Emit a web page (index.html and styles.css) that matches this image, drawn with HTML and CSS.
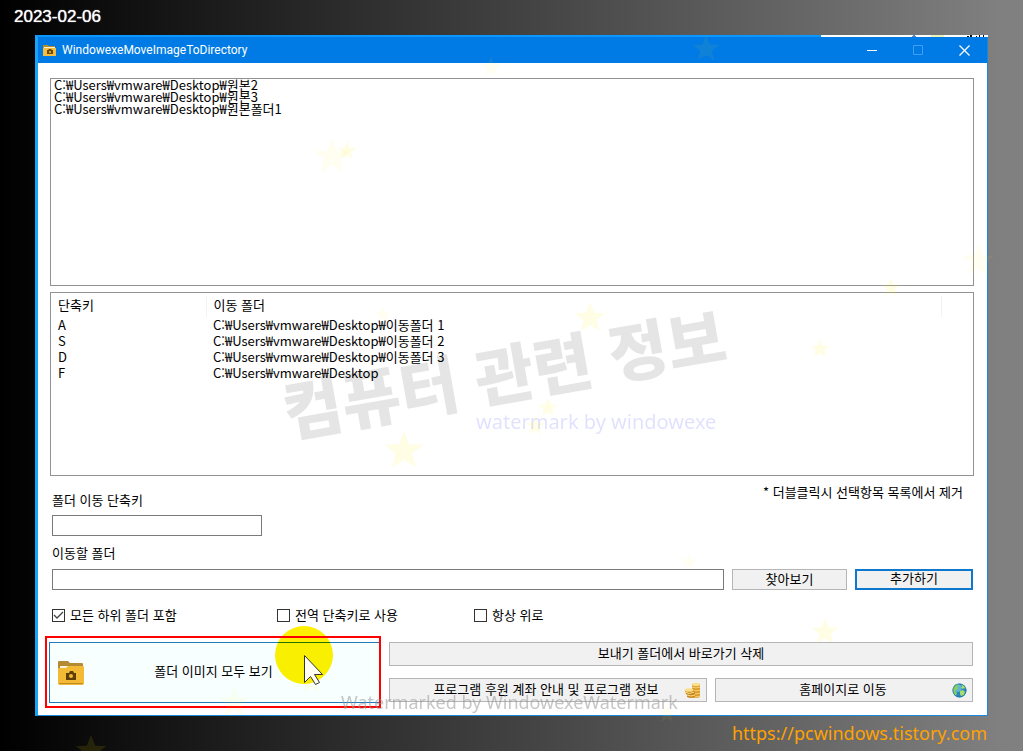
FILE: index.html
```html
<!DOCTYPE html>
<html lang="ko">
<head>
    <meta charset="UTF-8">
    <meta name="viewport" content="width=device-width, initial-scale=1.0">
    <title>WindowexeMoveImageToDirectory</title>
    <link rel="stylesheet" href="styles.css">
</head>
<body>
    <header class="date">2023-02-06</header>

    <main class="window">
        <div class="behind">
            <svg width="167" height="2">
                <path d="M92 0h2v1h1v1h-4v-1h1z" fill="#5b87b8"/>
                <path d="M110 0h13v2h-13z" fill="#eef3b8"/>
                <path d="M149 0h2v2h-2zM155 1h1v1h-1zM158 0h1v2h-1zM162 0h1v2h-1zM146 1h2v1h-2z" fill="#111"/>
            </svg>
        </div>
        <div class="titlebar">
            <svg class="title-icon" width="13" height="12" viewBox="0 0 13 12">
                <path d="M0 1h5l1 1h6v3H0z" fill="#b98a2a"/>
                <path d="M1 3h11v2H1z" fill="#fff3cf"/>
                <path d="M0 4h13v8H0z" fill="#f5bd3b"/>
                <path d="M4 6h1l1-1h2l1 1h1v4H4z" fill="#6b4a08"/>
                <circle cx="7" cy="8" r="1" fill="#f5bd3b"/>
            </svg>
            <h1>WindowexeMoveImageToDirectory</h1>
            <button class="win-btn" aria-label="최소화">
                <svg width="10" height="11"><path d="M0 5.500h10" stroke="#fff"/></svg>
            </button>
            <button class="win-btn" aria-label="최대화" disabled>
                <svg width="10" height="11"><path d="M.5 .5h9v9h-9z" fill="none" stroke="#3fa0f2"/></svg>
            </button>
            <button class="win-btn" aria-label="닫기">
                <svg width="11" height="11"><path d="M.5 .5l10 10M10.500 .5l-10 10" stroke="#fff" stroke-width="1.300"/></svg>
            </button>
        </div>

        <div class="content">
            <ul class="source-list">
                <li>C:₩Users₩vmware₩Desktop₩원본2</li>
                <li>C:₩Users₩vmware₩Desktop₩원본3</li>
                <li>C:₩Users₩vmware₩Desktop₩원본폴더1</li>
            </ul>

            <div class="target-list">
                <table>
                    <thead>
                        <tr><th class="key">단축키</th><th class="folder">이동 폴더</th><th></th></tr>
                    </thead>
                    <tbody>
                        <tr><td>A</td><td>C:₩Users₩vmware₩Desktop₩이동폴더 1</td><td></td></tr>
                        <tr><td>S</td><td>C:₩Users₩vmware₩Desktop₩이동폴더 2</td><td></td></tr>
                        <tr><td>D</td><td>C:₩Users₩vmware₩Desktop₩이동폴더 3</td><td></td></tr>
                        <tr><td>F</td><td>C:₩Users₩vmware₩Desktop</td><td></td></tr>
                    </tbody>
                </table>
            </div>

            <form class="form" onsubmit="return false">
                <div class="key-row">
                    <div class="field">
                        <label for="shortcut">폴더 이동 단축키</label>
                        <input type="text" id="shortcut">
                    </div>
                    <p class="hint">* 더블클릭시 선택항목 목록에서 제거</p>
                </div>

                <label class="folder-label" for="folder">이동할 폴더</label>
                <div class="folder-row">
                    <input type="text" id="folder">
                    <button type="button" class="btn browse">찾아보기</button>
                    <button type="submit" class="btn add">추가하기</button>
                </div>

                <div class="checks">
                    <label><input type="checkbox" checked>모든 하위 폴더 포함</label>
                    <label><input type="checkbox">전역 단축키로 사용</label>
                    <label><input type="checkbox">항상 위로</label>
                </div>

                <div class="actions">
                    <div class="highlight">
                        <button type="button" class="view-all">
                            <svg width="26" height="24" viewBox="0 0 26 24">
                                <path d="M1 0h9l2 2h12q1 0 1 1v6H0V1q0-1 1-1z" fill="#b58a34"/>
                                <path d="M2 5h22v3H2z" fill="#fff5d8"/>
                                <path d="M0 8q0-1 1-1h7l2-2h15q1 0 1 1v16q0 2-2 2H2q-2 0-2-2z" fill="#f3ba36"/>
                                <path d="M1 22.500h24" stroke="#c08b22"/>
                                <path d="M8 12h3l1-2h3l1 2h2v7H8z" fill="#5e3e05"/>
                                <circle cx="13" cy="15" r="2" fill="#f3ba36"/>
                            </svg>
                            <span>폴더 이미지 모두 보기</span>
                        </button>
                    </div>
                    <div class="links">
                        <button type="button" class="btn wide">보내기 폴더에서 바로가기 삭제</button>
                        <button type="button" class="btn with-icon">
                            <span>프로그램 후원 계좌 안내 및 프로그램 정보</span>
                            <svg width="17" height="17" viewBox="0 0 17 17">
                                <path d="M8 2v13q4 2 8 0V2z" fill="#d99a2b"/>
                                <ellipse cx="12" cy="2.500" rx="4" ry="1.700" fill="#fbe08a"/>
                                <path d="M8 5q4 2 8 0M8 8q4 2 8 0M8 11q4 2 8 0M8 14q4 2 8 0" fill="none" stroke="#fbd978"/>
                                <path d="M1 8v2q1 2 2 3v2q4 2 8 0v-3l-1-4z" fill="#c98720"/>
                                <ellipse cx="5" cy="8" rx="4.500" ry="1.800" fill="#fbe08a"/>
                                <path d="M1 10q4 3 9 0M3 13q4 2 8 0" fill="none" stroke="#fbe08a"/>
                            </svg>
                        </button>
                        <button type="button" class="btn with-icon">
                            <span>홈페이지로 이동</span>
                            <svg width="15" height="15" viewBox="0 0 15 15">
                                <circle cx="7.500" cy="7.500" r="7" fill="#2a86bd"/>
                                <circle cx="5.500" cy="5" r="4" fill="#5fb5dc"/>
                                <path d="M1 5q2-4 5-4l1 2-2 1 1 2-3 2 2 2-1 3Q0 10 1 5z" fill="#8bd05a"/>
                                <path d="M9 1q4 1 5 5l-2-1-1 1-2-1 1-2zM8 8l3-1 2 2-1 3-3 1-1-2z" fill="#a8dc6c"/>
                                <circle cx="7.500" cy="7.500" r="6.500" fill="none" stroke="#1c6fa5" opacity=".6"/>
                            </svg>
                        </button>
                    </div>
                </div>
            </form>
        </div>
    </main>

    <footer class="site"><a href="https://pcwindows.tistory.com">https://pcwindows.tistory.com</a></footer>

    <!-- watermark, stars and mouse pointer on top of the window -->
    <svg class="overlay" width="1023" height="751">
        <defs>
            <path id="star" d="M0-10L2.600-3.300 9.500-3.100 4.100 1.300 5.900 8.100 0 4.200-5.900 8.100-4.100 1.300-9.500-3.100-2.600-3.300z"/>
        </defs>
        <g fill="#ffee00" opacity=".11">
            <use href="#star" transform="translate(590 318) scale(1.600)"/>
            <use href="#star" transform="translate(404 451) scale(2)"/>
            <use href="#star" transform="translate(548 408)"/>
            <use href="#star" transform="translate(535 426)"/>
            <use href="#star" transform="translate(820 349)"/>
            <use href="#star" transform="translate(825 632) scale(1.400)"/>
            <use href="#star" transform="translate(347 151)"/>
            <use href="#star" transform="translate(891 288)"/>
            <use href="#star" transform="translate(91 751) scale(1.600)"/>
        </g>
        <g fill="#ffee00" opacity=".06">
            <use href="#star" transform="translate(706 49) scale(1.400)"/>
            <use href="#star" transform="translate(491 67) scale(1.100)"/>
            <use href="#star" transform="translate(332 157) scale(1.900)"/>
            <use href="#star" transform="translate(978 261) scale(1.700)"/>
            <use href="#star" transform="translate(383 315) scale(.8)"/>
            <use href="#star" transform="translate(689 562) scale(.8)"/>
            <use href="#star" transform="translate(234 703) scale(1.600)"/>
            <use href="#star" transform="translate(311 682) scale(1.300)"/>
            <use href="#star" transform="translate(667 714)"/>
        </g>
        <text class="mark-ko" x="288" y="437" transform="rotate(-10 288 437)">컴퓨터 관련 정보</text>
        <text class="mark-en" x="476" y="429">watermark by windowexe</text>
        <text class="mark-bottom" x="341" y="709">Watermarked by WindowexeWatermark</text>
        <circle class="spot" cx="304" cy="655" r="29"/>
        <path d="M304.500 655.500v27l6-6 5 8 4-2-5-8h8z" fill="#fffef0" stroke="#333"/>
    </svg>
</body>
</html>
```

FILE: styles.css
```css
* {
    box-sizing: border-box;
}

body {
    position: relative;
    display: flex;
    flex-direction: column;
    min-height: 100vh;
    margin: 0;
    background: linear-gradient(to right, #000, #808080 98%);
    font-family: "Noto Sans CJK KR", sans-serif;
    font-size: 13px;
    line-height: 16px;
    color: #000;
    overflow: hidden;
}

button, input {
    font: inherit;
    color: inherit;
}

.date {
    height: 35px;
    padding: 7px 14px;
    font-family: "Liberation Sans", Arial, sans-serif;
    font-size: 17px;
    line-height: 20px;
    color: #fff;
    text-shadow: 0 0 1px #fff;
}

.window {
    position: relative;
    flex: 1;
    display: flex;
    flex-direction: column;
    margin: 0 35px;
    background: #fff;
    border: 1px solid #1e88d8;
    border-top: 2px solid #0a97ff;
    border-left: 3px solid #18a4f8;
}

/* strip of the window underneath */
.behind {
    position: absolute;
    top: -2px;
    right: -1px;
    width: 167px;
    height: 2px;
    background: #fff;
}

.behind svg {
    display: block;
}

.titlebar {
    display: flex;
    align-items: center;
    height: 26px;
    background: #007be5;
    color: #fff;
}

.title-icon {
    margin: 0 6px 0 5px;
}

.titlebar h1 {
    flex: 1;
    margin: 0;
    font-family: Roboto, sans-serif;
    font-size: 12px;
    font-weight: normal;
}

.win-btn {
    display: flex;
    align-items: center;
    justify-content: center;
    width: 46px;
    height: 26px;
    padding: 0;
    border: 0;
    background: none;
}

.content {
    flex: 1;
    display: flex;
    flex-direction: column;
    gap: 6px;
    padding: 15px 13px 7px 12px;
}

.source-list {
    flex: 208 0 0;
    margin: 0;
    padding: 0 3px;
    border: 1px solid #919196;
    list-style: none;
    line-height: 12px;
}

.target-list {
    flex: 184 0 0;
    border: 1px solid #919196;
}

.target-list table {
    width: 100%;
    border-collapse: collapse;
    table-layout: fixed;
    margin-top: 3px;
}

.target-list th {
    height: 21px;
    padding: 0 7px 3px;
    border-right: 1px solid #f2f2f2;
    font-weight: normal;
    text-align: left;
}

.target-list td {
    height: 16px;
    padding: 0 7px;
}

.key {
    width: 155px;
}

.folder {
    width: auto;
}

.target-list th:last-child {
    width: 32px;
    border: 0;
}

.form {
    padding: 4px 1px 0 2px;
}

.key-row {
    display: flex;
    justify-content: space-between;
}

.field {
    display: flex;
    flex-direction: column;
    gap: 7px;
    padding-top: 6px;
}

.hint {
    margin: 0 10px 0 0;
    line-height: 12px;
}

input[type="text"] {
    height: 21px;
    padding: 0 4px;
    border: 1px solid #7a7a7a;
    background: #fff;
}

#shortcut {
    width: 210px;
}

.folder-label {
    display: block;
    margin: 9px 0 8px;
}

.folder-row {
    display: flex;
    gap: 8px;
}

#folder {
    flex: 1;
    min-width: 0;
}

.btn {
    height: 24px;
    padding: 0 0 3px;
    border: 1px solid #b5b5b8;
    background: #f1f1f1;
    line-height: 18px;
}

.folder-row .btn {
    height: 21px;
}

.browse {
    width: 115px;
}

.folder-row .add {
    width: 118px;
    border: 2px solid #0f78cc;
    line-height: 14px;
}

.checks {
    display: flex;
    margin-top: 17px;
}

.checks label {
    display: flex;
    align-items: center;
    gap: 5px;
    width: 197px;
}

.checks label:first-child {
    width: 225px;
}

.checks input {
    appearance: none;
    width: 13px;
    height: 13px;
    margin: 0;
    border: 1px solid #333;
    background: #fff;
}

.checks input:checked {
    background: #fff url('data:image/svg+xml,<svg xmlns="http://www.w3.org/2000/svg" width="11" height="11"><path d="M1 5l3 3 6-6" fill="none" stroke="%23444" stroke-width="1.300"/></svg>');
}

.actions {
    display: flex;
    gap: 8px;
    margin: 13px 0 0 -7px;
}

.highlight {
    width: 336px;
    height: 72px;
    padding: 4px 0 3px 2px;
    border: 2px solid #f00;
}

.view-all {
    display: flex;
    align-items: center;
    width: 100%;
    height: 61px;
    padding: 0 8px;
    border: 1px solid #1f7bb8;
    border-right: 0;
    background: #f8ffff;
}

.view-all span {
    flex: 1;
    padding: 0 28px 4px 0;
}

.links {
    flex: 1;
    display: grid;
    grid-template-columns: 318fr 258fr;
    gap: 12px 8px;
    align-content: start;
    padding-top: 6px;
}

.wide {
    grid-column: 1 / -1;
}

.with-icon {
    display: flex;
    align-items: center;
    padding: 0 5px 0 0;
}

.with-icon span {
    flex: 1;
    padding: 0 0 3px 18px;
}

.site {
    height: 35px;
    padding: 5px 36px;
    text-align: right;
    font-family: "Noto Sans", sans-serif;
    font-size: 18px;
    line-height: 24px;
}

.site a {
    color: #ffa200;
    text-decoration: none;
}

.overlay {
    position: absolute;
    top: 0;
    left: 0;
    pointer-events: none;
}

.mark-ko {
    font-size: 64px;
    font-weight: 900;
    fill: #000;
    opacity: 0.1;
}

.mark-en {
    font-family: "Noto Sans", sans-serif;
    font-size: 20px;
    fill: rgba(0, 0, 255, 0.12);
}

.mark-bottom {
    font-family: "Noto Sans", sans-serif;
    font-size: 18px;
    fill: rgba(150, 150, 150, 0.55);
}

.spot {
    fill: #fff000;
    mix-blend-mode: multiply;
}
```
